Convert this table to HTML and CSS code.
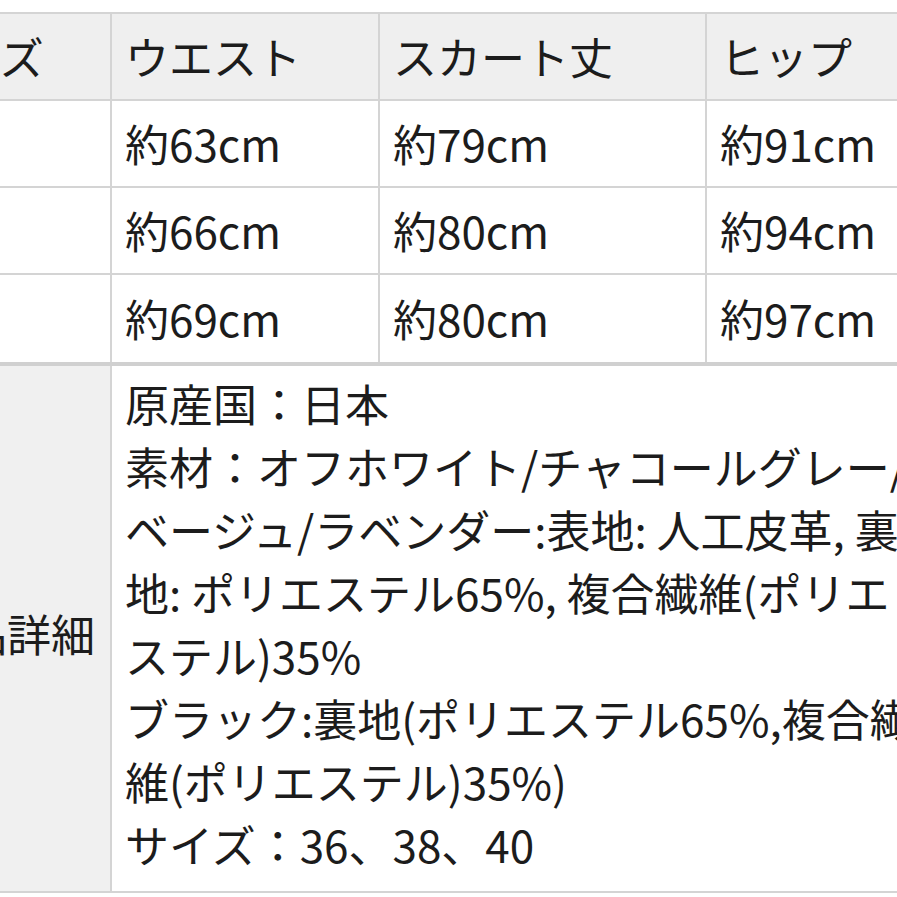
FILE: index.html
```html
<!DOCTYPE html>
<html lang="ja">
<head>
<meta charset="utf-8">
<link rel="stylesheet" href="styles.css">
</head>
<body>
<table class="size-table">
  <colgroup>
    <col class="c-label">
    <col class="c-waist">
    <col class="c-length">
    <col class="c-hip">
  </colgroup>
  <tr class="head">
    <th>サイズ</th>
    <th>ウエスト</th>
    <th>スカート丈</th>
    <th>ヒップ</th>
  </tr>
  <tr>
    <td class="label-empty"></td>
    <td>約63cm</td>
    <td>約79cm</td>
    <td>約91cm</td>
  </tr>
  <tr>
    <td class="label-empty"></td>
    <td>約66cm</td>
    <td>約80cm</td>
    <td>約94cm</td>
  </tr>
  <tr class="last-size">
    <td class="label-empty"></td>
    <td>約69cm</td>
    <td>約80cm</td>
    <td>約97cm</td>
  </tr>
  <tr class="detail">
    <th class="detail-label">商品詳細</th>
    <td class="detail-body" colspan="3">
      <span class="line">原産国：日本</span>
      <span class="line">素材：オフホワイト/チャコールグレー/</span>
      <span class="line">ベージュ/ラベンダー:表地: 人工皮革, 裏</span>
      <span class="line">地: ポリエステル65%, 複合繊維(ポリエ</span>
      <span class="line">ステル)35%</span>
      <span class="line">ブラック:裏地(ポリエステル65%,複合繊</span>
      <span class="line">維(ポリエステル)35%)</span>
      <span class="line">サイズ：36、38、40</span>
    </td>
  </tr>
</table>
</body>
</html>
```

FILE: styles.css
```css
html, body {
  margin: 0;
  padding: 0;
  background: #ffffff;
  overflow: hidden;
}

body {
  width: 897px;
  height: 897px;
  font-family: "Noto Sans CJK JP", "Noto Sans", sans-serif;
  color: #1c1c1c;
}

.size-table {
  margin-top: 12px;
  margin-left: -102px;
  border-collapse: collapse;
  table-layout: fixed;
  width: 1062px;
  font-size: 44px;
  font-weight: 400;
}

.c-label { width: 212px; }
.c-waist { width: 268px; }
.c-length { width: 327px; }
.c-hip { width: 255px; }

.size-table th,
.size-table td {
  border: 2px solid #d4d4d4;
  padding: 0 13px;
  height: 85px;
  text-align: left;
  vertical-align: middle;
  font-weight: 400;
  white-space: nowrap;
  overflow: hidden;
  line-height: 1.2;
}

.head th {
  background: #efefef;
}

.last-size td {
  height: 87px;
  border-bottom: 4px solid #d0d0d0;
}

.detail-label {
  background: #f0f0f0;
}

.size-table .detail-label {
  padding-left: 19px;
  padding-top: 10px;
}

.size-table .detail-body {
  padding-top: 6px;
  padding-bottom: 15px;
}

.line {
  display: block;
  line-height: 63px;
  white-space: nowrap;
}
```
